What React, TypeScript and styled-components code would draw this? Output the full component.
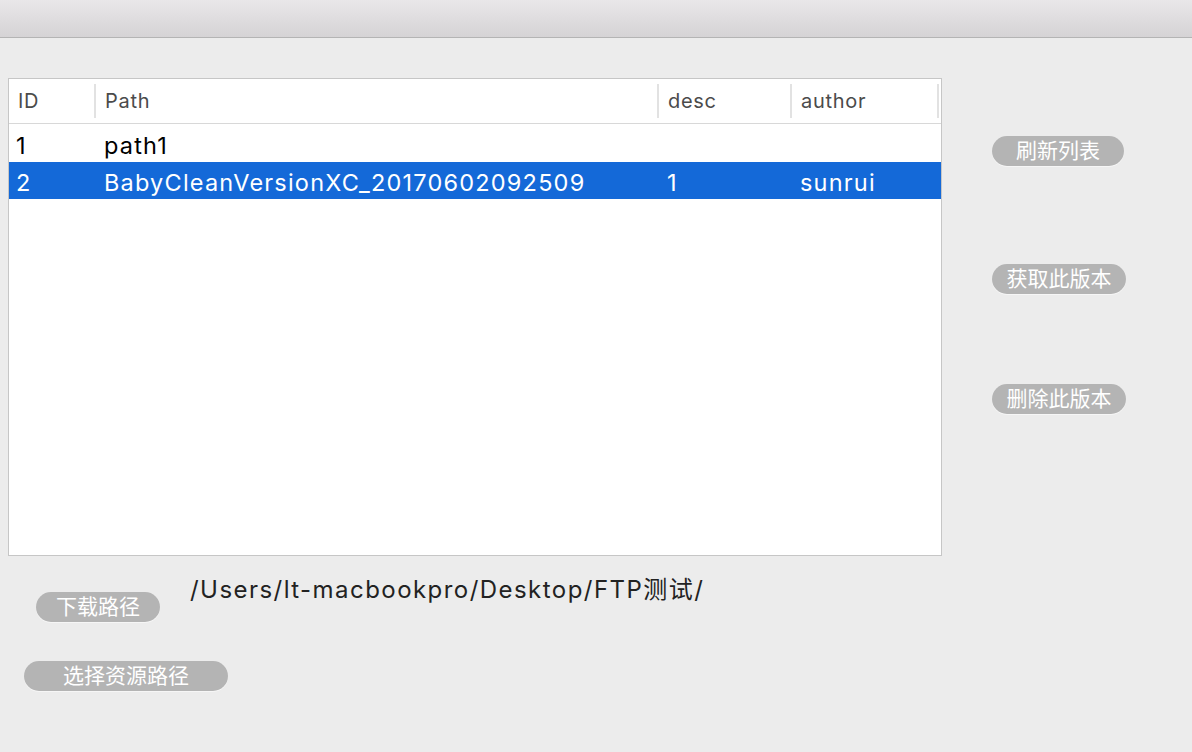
import React from "react";
import styled, { createGlobalStyle } from "styled-components";

const GlobalStyle = createGlobalStyle`
  html, body {
    margin: 0;
    padding: 0;
    background: #ececec;
  }
  body {
    font-family: Inter, "Noto Sans CJK SC", sans-serif;
  }
`;

interface Row {
  id: string;
  path: string;
  desc: string;
  author: string;
}

const rows: Row[] = [
  { id: "1", path: "path1", desc: "", author: "" },
  { id: "2", path: "BabyCleanVersionXC_20170602092509", desc: "1", author: "sunrui" },
];

const App = () => {
  return (
    <>
      <GlobalStyle />
      <Window>
        <TitleBar />
        <Content>
          <Main>
            <Table>
              <HeaderRow>
                <HeaderCell $width={87}>ID</HeaderCell>
                <HeaderCell $width={563}>Path</HeaderCell>
                <HeaderCell $width={133}>desc</HeaderCell>
                <HeaderCell $width={147}>author</HeaderCell>
              </HeaderRow>
              {rows.map((row, i) => (
                <BodyRow key={row.id} $selected={i === 1}>
                  <Cell $width={87}>{row.id}</Cell>
                  <Cell $width={563}>{row.path}</Cell>
                  <Cell $width={133}>{row.desc}</Cell>
                  <Cell $width={147}>{row.author}</Cell>
                </BodyRow>
              ))}
            </Table>
            <SideButtons>
              <PillButton $top={58} $width={132}>刷新列表</PillButton>
              <PillButton $top={98} $width={134}>获取此版本</PillButton>
              <PillButton $top={90} $width={134}>删除此版本</PillButton>
            </SideButtons>
          </Main>
          <DownloadRow>
            <PillButton $top={36} $width={124}>下载路径</PillButton>
            <PathText>/Users/lt-macbookpro/Desktop/FTP测试/</PathText>
          </DownloadRow>
          <SourceRow>
            <PillButton $top={0} $width={204}>选择资源路径</PillButton>
          </SourceRow>
        </Content>
      </Window>
    </>
  );
};

export default App;

const Window = styled.div`
  width: 1192px;
  height: 752px;
  overflow: hidden;
  background: #ececec;
`;

const TitleBar = styled.div`
  height: 37px;
  background: linear-gradient(#e9e7e9, #d5d3d5);
  border-bottom: 1px solid #b4b4b4;
`;

const Content = styled.div`
  padding: 40px 0 0 8px;
`;

const Main = styled.div`
  display: flex;
  flex-direction: row;
  align-items: flex-start;
`;

const Table = styled.div`
  width: 932px;
  height: 476px;
  background: #fff;
  border: 1px solid #c6c6c6;
  display: flex;
  flex-direction: column;
`;

const HeaderRow = styled.div`
  display: flex;
  height: 44px;
  border-bottom: 1px solid #d8d8d8;
  align-items: center;
`;

const HeaderCell = styled.div<{ $width: number }>`
  width: ${(p) => p.$width}px;
  height: 34px;
  box-sizing: border-box;
  padding-left: 9px;
  border-right: 2px solid #e2e2e2;
  display: flex;
  align-items: center;
  font-size: 20px;
  letter-spacing: 0.7px;
  color: #4b4b4b;
`;

const BodyRow = styled.div<{ $selected: boolean }>`
  display: flex;
  height: 37px;
  margin-top: 1px;
  align-items: center;
  background: ${(p) => (p.$selected ? "#1469d8" : "transparent")};
  color: ${(p) => (p.$selected ? "#fff" : "#000")};
  & + & {
    margin-top: 0;
  }
`;

const Cell = styled.div<{ $width: number }>`
  width: ${(p) => p.$width}px;
  box-sizing: border-box;
  padding-left: 7px;
  padding-top: 3px;
  font-size: 23.5px;
  letter-spacing: 1.2px;
  white-space: nowrap;
  & + & {
    padding-left: 8px;
  }
`;

const SideButtons = styled.div`
  display: flex;
  flex-direction: column;
  align-items: flex-start;
  margin-left: 50px;
`;

const PillButton = styled.div<{ $top: number; $width: number }>`
  margin-top: ${(p) => p.$top}px;
  width: ${(p) => p.$width}px;
  height: 30px;
  border-radius: 15px;
  background: #b4b4b4;
  box-shadow: 0 1px 0 #f6f6f6;
  color: #fff;
  font-size: 21px;
  line-height: 30px;
  display: flex;
  align-items: center;
  justify-content: center;
  flex-shrink: 0;
`;

const DownloadRow = styled.div`
  display: flex;
  align-items: flex-start;
  padding-left: 28px;
`;

const PathText = styled.div`
  margin-left: 30px;
  margin-top: 14px;
  font-size: 24px;
  letter-spacing: 1.45px;
  color: #222;
`;

const SourceRow = styled.div`
  display: flex;
  padding-left: 16px;
  margin-top: 39px;
`;
